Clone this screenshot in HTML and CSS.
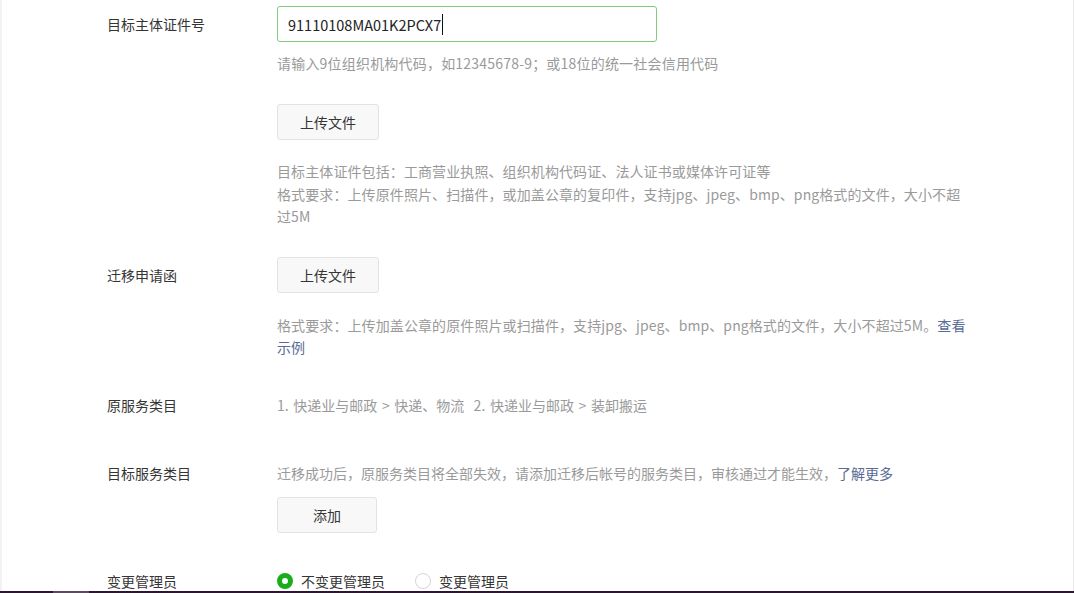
FILE: index.html
```html
<!DOCTYPE html>
<html lang="zh-CN">
<head>
<meta charset="utf-8">
<title>迁移</title>
<link rel="stylesheet" href="styles.css">
</head>
<body>
<div class="page">
  <div class="form">
    <div class="row row-id">
      <div class="label label-input">目标主体证件号</div>
      <div class="content">
        <div class="input"><span class="value">91110108MA01K2PCX7</span><span class="caret"></span></div>
        <p class="tip tip-input">请输入9位组织机构代码，如12345678-9；或18位的统一社会信用代码</p>
        <button class="btn btn-upload1">上传文件</button>
        <p class="tip tip-desc">目标主体证件包括：工商营业执照、组织机构代码证、法人证书或媒体许可证等<br>格式要求：上传原件照片、扫描件，或加盖公章的复印件，支持jpg、jpeg、bmp、png格式的文件，大小不超<br>过5M</p>
      </div>
    </div>

    <div class="row row-letter">
      <div class="label label-btn">迁移申请函</div>
      <div class="content">
        <button class="btn">上传文件</button>
        <p class="tip tip-desc2">格式要求：上传加盖公章的原件照片或扫描件，支持jpg、jpeg、bmp、png格式的文件，大小不超过5M。<a class="link" href="#">查看<br>示例</a></p>
      </div>
    </div>

    <div class="row row-old">
      <div class="label">原服务类目</div>
      <div class="content">
        <p class="tip tip-line tip-cats">1. 快递业与邮政 &gt; 快递、物流&nbsp; 2. 快递业与邮政 &gt; 装卸搬运</p>
      </div>
    </div>

    <div class="row row-new">
      <div class="label">目标服务类目</div>
      <div class="content">
        <p class="tip tip-line">迁移成功后，原服务类目将全部失效，请添加迁移后帐号的服务类目，审核通过才能生效，<a class="link" href="#">了解更多</a></p>
        <button class="btn btn-add">添加</button>
      </div>
    </div>

    <div class="row row-admin">
      <div class="label">变更管理员</div>
      <div class="content radios">
        <label class="radio"><span class="dot checked"></span>不变更管理员</label>
        <label class="radio"><span class="dot"></span>变更管理员</label>
      </div>
    </div>
  </div>
</div>
<div class="taskbar"><span class="task-item"></span></div>
</body>
</html>
```

FILE: styles.css
```css
html, body {
  margin: 0;
  padding: 0;
  height: 100%;
  overflow: hidden;
  background: #fff;
}
body {
  font-family: "Noto Sans CJK SC", "Noto Sans", sans-serif;
  font-size: 14px;
  color: #353535;
  display: flex;
  flex-direction: column;
}
.page {
  flex: 1;
  min-height: 0;
  border-left: 2px solid #f2f2f2;
  border-right: 1px solid #e8e8e8;
  overflow: hidden;
}
.form {
  padding: 6px 0 0 105px;
}
.row {
  display: flex;
  align-items: flex-start;
}
.label {
  width: 170px;
  flex: none;
  line-height: 22px;
  color: #353535;
}
.label-input { padding-top: 7px; }
.label-btn { padding-top: 7px; }
.content {
  display: flex;
  flex-direction: column;
  align-items: flex-start;
}
.input {
  box-sizing: border-box;
  width: 380px;
  height: 36px;
  border: 1px solid #7fcc7e;
  border-radius: 3px;
  padding: 0 10px;
  display: flex;
  align-items: center;
  font-size: 14.5px;
  color: #222;
}
.caret {
  display: inline-block;
  width: 1px;
  height: 21px;
  background: #111;
  margin-left: 1px;
}
.tip {
  margin: 0;
  color: #9a9a9a;
  line-height: 22px;
  white-space: nowrap;
}
.tip-input { margin-top: 10px; letter-spacing: 0.2px; }
.btn {
  box-sizing: border-box;
  width: 102px;
  height: 36px;
  border: 1px solid #e3e3e3;
  border-radius: 3px;
  background: #f8f8f8;
  font-family: inherit;
  font-size: 14px;
  color: #353535;
  padding: 0;
  cursor: pointer;
}
.btn-upload1 { margin-top: 30px; }
.tip-desc { margin-top: 20px; line-height: 22.5px; letter-spacing: 0.1px; }
.row-letter { margin-top: 29px; }
.tip-desc2 { margin-top: 21px; letter-spacing: 0.1px; }
.link { color: #576b95; text-decoration: none; }
.row-old { margin-top: 36px; }
.tip-cats { word-spacing: 1.5px; }
.row-new { margin-top: 46px; }
.btn-add { width: 100px; margin-top: 13px; }
.row-admin { margin-top: 37px; }
.radios {
  flex-direction: row;
  align-items: center;
  height: 22px;
}
.radio {
  display: flex;
  align-items: center;
  margin-right: 30px;
  line-height: 22px;
  color: #353535;
}
.dot {
  box-sizing: border-box;
  width: 16px;
  height: 16px;
  border-radius: 50%;
  border: 1px solid #d4d4d4;
  background: #fff;
  margin-right: 8px;
}
.dot.checked {
  border: 5px solid #1aad19;
}
.taskbar {
  flex: none;
  height: 2px;
  background: #2c1630;
}
.task-item {
  display: block;
  margin-left: 53px;
  width: 36px;
  height: 2px;
  background: #5c4b5e;
}
```
